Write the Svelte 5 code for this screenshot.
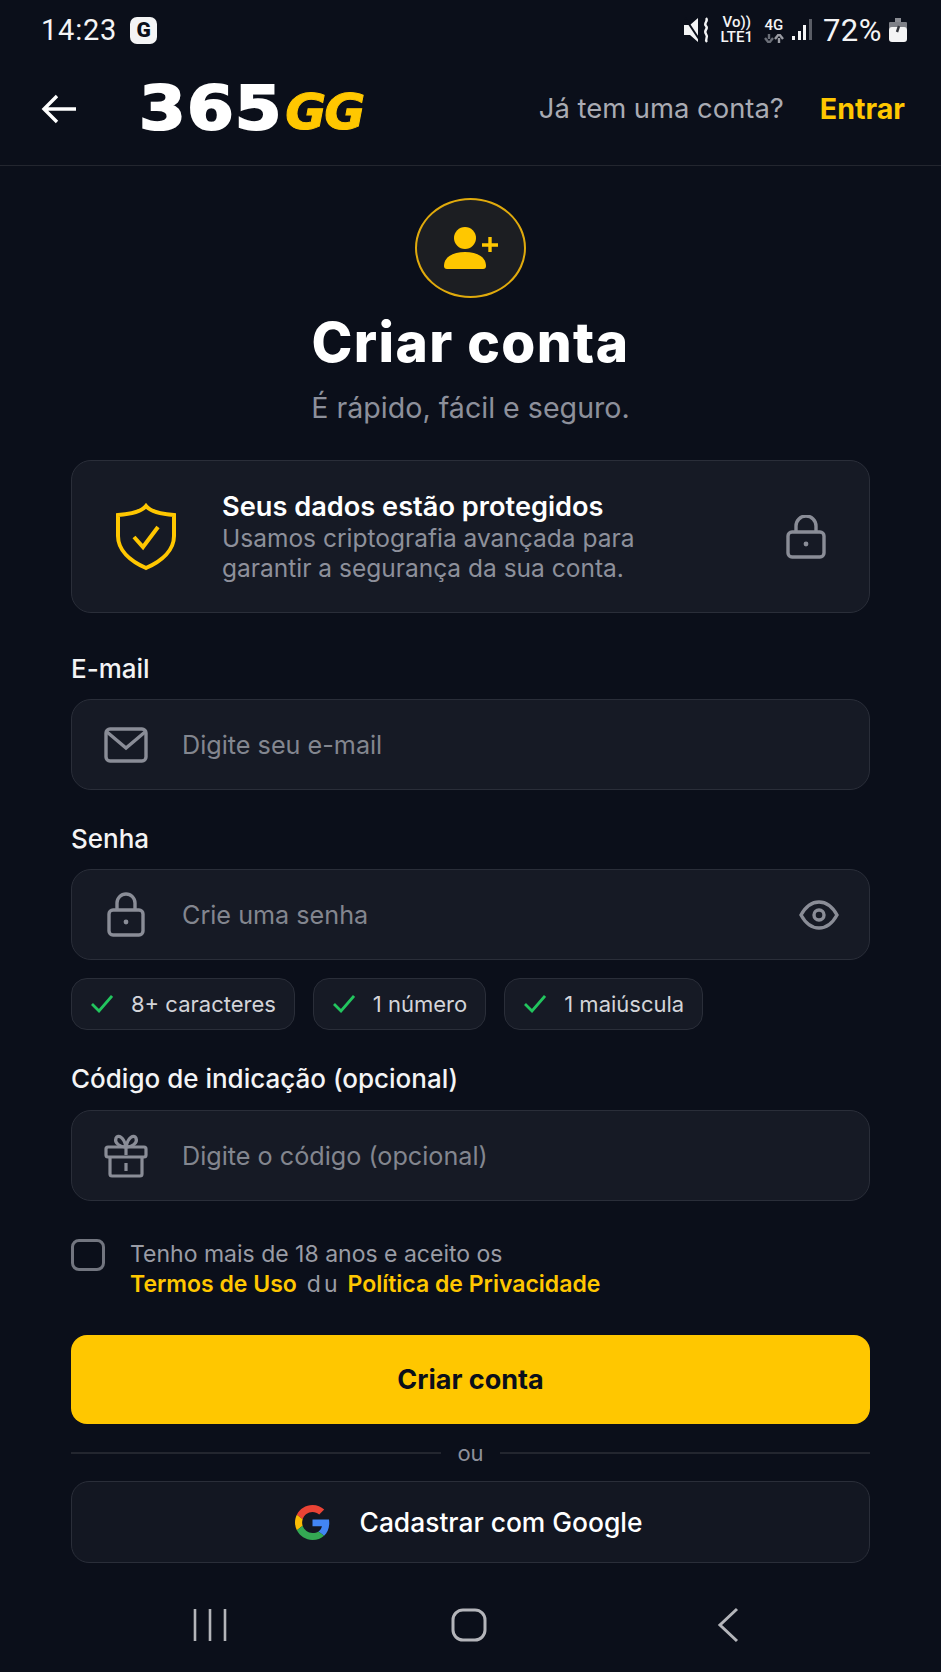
<script>
  const chips = ['8+ caracteres', '1 número', '1 maiúscula'];
</script>

<div class="screen">
  <div class="status">
    <div class="status-left">
      <span class="clock">14:23</span>
      <span class="g-badge">G</span>
    </div>
    <div class="status-right">
      <!-- mute icon -->
      <svg width="26" height="26" viewBox="0 0 26 26">
        <path d="M0 8h6l8-7v24l-8-7H0z" fill="#f4f4f5" />
        <path d="M1 1l16 24" stroke="#0b0f1a" stroke-width="2" />
        <path d="M22 1c3 3-3 5 0 8s-3 4 0 8-2 5 1 8" stroke="#f4f4f5" stroke-width="2.4" fill="none" />
      </svg>
      <div class="net">
        <span>Vo))</span>
        <span>LTE1</span>
      </div>
      <div class="net four">
        <span>4G</span>
        <svg width="20" height="9" viewBox="0 0 20 9">
          <path d="M5 0v5M1 4l4 5 4-5" stroke="#6b6f78" stroke-width="2.4" fill="none" />
          <path d="M15 9V4M11 5l4-5 4 5" stroke="#9a9ca3" stroke-width="2.4" fill="none" />
        </svg>
      </div>
      <svg width="22" height="24" viewBox="0 0 22 24">
        <rect x="1" y="18" width="3" height="4" fill="#f4f4f5" />
        <rect x="7" y="13" width="3" height="9" fill="#f4f4f5" />
        <rect x="12" y="7" width="3" height="15" fill="#f4f4f5" />
        <rect x="18" y="1" width="3" height="21" fill="#5a5d66" />
      </svg>
      <span class="pct">72%</span>
      <svg width="18" height="26" viewBox="0 0 18 26">
        <rect x="6" y="1" width="6" height="4" fill="#8a8c93" />
        <rect x="0" y="5" width="18" height="7" rx="1" fill="#7e8087" />
        <rect x="0" y="10" width="18" height="15" rx="3" fill="#f4f4f5" />
        <path d="M10 9l-2 6" stroke="#33353c" stroke-width="2.4" />
      </svg>
    </div>
  </div>

  <header class="topbar">
    <svg class="back" width="36" height="30" viewBox="0 0 36 30">
      <path d="M35 15H3M16 2L3 15l13 13" stroke="#fff" stroke-width="3.4" fill="none" />
    </svg>
    <div class="logo"><span class="logo-num">365</span><span class="logo-gg">GG</span></div>
    <div class="account">
      <span class="account-q">Já tem uma conta?</span>
      <span class="account-link">Entrar</span>
    </div>
  </header>

  <main class="form">
    <div class="avatar">
      <svg width="54" height="44" viewBox="0 0 54 44">
        <circle cx="21" cy="12" r="11" fill="#ffc700" />
        <path d="M0 40c0-9 9-14 21-14s21 5 21 14c0 2-1 3-3 3H3c-2 0-3-1-3-3z" fill="#ffc700" />
        <path d="M46 11v15M38 19h16" stroke="#ffc700" stroke-width="3.4" />
      </svg>
    </div>
    <h1>Criar conta</h1>
    <p class="subtitle">É rápido, fácil e seguro.</p>

    <section class="secure">
      <svg class="shield" width="62" height="68" viewBox="0 0 62 68">
        <path d="M31 3c4 5 14 8 28 9v21c0 14-12 25-28 32C15 58 3 47 3 33V12c14-1 24-4 28-9z" stroke="#ffc700" stroke-width="4" fill="none" />
        <path d="M19 34l9 10 15-20" stroke="#ffc700" stroke-width="4" fill="none" />
      </svg>
      <div class="secure-text">
        <div class="secure-title">Seus dados estão protegidos</div>
        <div class="secure-desc">Usamos criptografia avançada para<br />garantir a segurança da sua conta.</div>
      </div>
      <svg width="40" height="44" viewBox="0 0 40 44">
        <rect x="2" y="17" width="36" height="25" rx="4" stroke="#8a8d97" stroke-width="3.4" fill="none" />
        <path d="M10 17V11a10 10 0 0 1 20 0v6" stroke="#8a8d97" stroke-width="3.4" fill="none" />
        <circle cx="20" cy="29" r="2.4" fill="#8a8d97" />
      </svg>
    </section>

    <label class="label first" for="email">E-mail</label>
    <div class="field" id="email">
      <svg class="field-icon" width="44" height="36" viewBox="0 0 44 36">
        <rect x="2" y="2" width="40" height="32" rx="4" stroke="#8a8d97" stroke-width="3.4" fill="none" />
        <path d="M3 5l19 16L41 5" stroke="#8a8d97" stroke-width="3.4" fill="none" />
      </svg>
      <span class="placeholder">Digite seu e-mail</span>
    </div>

    <label class="label" for="senha">Senha</label>
    <div class="field" id="senha">
      <svg class="field-icon" width="44" height="45" viewBox="0 0 44 45">
        <rect x="5" y="18" width="34" height="25" rx="4" stroke="#8a8d97" stroke-width="3.4" fill="none" />
        <path d="M13 18V11a9 9 0 0 1 18 0v7" stroke="#8a8d97" stroke-width="3.4" fill="none" />
        <circle cx="22" cy="30" r="2.4" fill="#8a8d97" />
      </svg>
      <span class="placeholder">Crie uma senha</span>
      <svg class="eye" width="40" height="30" viewBox="0 0 40 30">
        <path d="M2 15C7 6 13 2 20 2s13 4 18 13c-5 9-11 13-18 13S7 24 2 15z" stroke="#8a8d97" stroke-width="3.4" fill="none" />
        <circle cx="20" cy="15" r="5" stroke="#8a8d97" stroke-width="3.4" fill="none" />
      </svg>
    </div>

    <div class="chips">
      {#each chips as chip}
        <div class="chip">
          <svg width="22" height="18" viewBox="0 0 22 18">
            <path d="M1 9l7 7L21 1" stroke="#22c55e" stroke-width="2.8" fill="none" />
          </svg>
          <span>{chip}</span>
        </div>
      {/each}
    </div>

    <label class="label code" for="codigo">Código de indicação (opcional)</label>
    <div class="field" id="codigo">
      <svg class="field-icon" width="44" height="44" viewBox="0 0 44 44">
        <rect x="2" y="13" width="40" height="10" rx="2" stroke="#8a8d97" stroke-width="3.2" fill="none" />
        <path d="M6 23v17a2 2 0 0 0 2 2h28a2 2 0 0 0 2-2V23M22 13v8M22 29v8" stroke="#8a8d97" stroke-width="3.2" fill="none" />
        <path d="M22 13C16 13 10 9 12 4c2-4 8-1 10 9 2-10 8-13 10-9 2 5-4 9-10 9z" stroke="#8a8d97" stroke-width="3.2" fill="none" />
      </svg>
      <span class="placeholder">Digite o código (opcional)</span>
    </div>

    <div class="terms">
      <span class="checkbox"></span>
      <div class="terms-text">
        <div>Tenho mais de 18 anos e aceito os</div>
        <div><span class="terms-link">Termos de Uso</span><span class="terms-du">du</span><span class="terms-link">Política de Privacidade</span></div>
      </div>
    </div>

    <button class="submit">Criar conta</button>

    <div class="divider"><span>ou</span></div>

    <button class="google">
      <svg width="35" height="35" viewBox="0 0 48 48">
        <path fill="#EA4335" d="M24 9.5c3.54 0 6.71 1.22 9.21 3.6l6.85-6.85C35.9 2.38 30.47 0 24 0 14.62 0 6.51 5.38 2.56 13.22l7.98 6.19C12.43 13.72 17.74 9.5 24 9.5z" />
        <path fill="#4285F4" d="M46.98 24.55c0-1.57-.15-3.09-.38-4.55H24v9.02h12.94c-.58 2.96-2.26 5.48-4.78 7.18l7.73 6c4.51-4.18 7.09-10.36 7.09-17.65z" />
        <path fill="#FBBC05" d="M10.53 28.59c-.48-1.45-.76-2.99-.76-4.59s.27-3.14.76-4.59l-7.98-6.19C.92 16.46 0 20.12 0 24c0 3.88.92 7.54 2.56 10.78l7.97-6.19z" />
        <path fill="#34A853" d="M24 48c6.48 0 11.93-2.13 15.89-5.81l-7.73-6c-2.15 1.45-4.92 2.3-8.16 2.3-6.26 0-11.57-4.22-13.47-9.91l-7.98 6.19C6.51 42.62 14.62 48 24 48z" />
      </svg>
      <span>Cadastrar com Google</span>
    </button>
  </main>

  <nav class="navbar">
    <div class="nav-item">
      <svg width="34" height="32" viewBox="0 0 34 32">
        <path d="M2 0v32M17 0v32M32 0v32" stroke="#b4b5ba" stroke-width="2.6" />
      </svg>
    </div>
    <div class="nav-item">
      <svg width="36" height="34" viewBox="0 0 36 34">
        <rect x="2" y="2" width="32" height="30" rx="10" stroke="#b4b5ba" stroke-width="3" fill="none" />
      </svg>
    </div>
    <div class="nav-item">
      <svg width="22" height="36" viewBox="0 0 22 36">
        <path d="M20 2L3 18l17 16" stroke="#b4b5ba" stroke-width="3" fill="none" />
      </svg>
    </div>
  </nav>
</div>

<style>
  :global(body) {
    margin: 0;
    background: #0b0f1a;
  }

  .screen {
    width: 941px;
    height: 1672px;
    overflow: hidden;
    background: #0b0f1a;
    color: #fff;
    font-family: Inter, "Liberation Sans", sans-serif;
  }

  .status {
    height: 60px;
    padding: 0 34px 0 41px;
    display: flex;
    align-items: center;
    justify-content: space-between;
    color: #f4f4f5;
    font-family: Roboto, sans-serif;
  }

  .status-left {
    display: flex;
    align-items: center;
    gap: 13px;
  }

  .clock {
    font-size: 29px;
    letter-spacing: 0.8px;
  }

  .g-badge {
    width: 27px;
    height: 27px;
    border-radius: 7px;
    background: #f4f4f5;
    color: #0b0f1a;
    font-size: 21px;
    font-weight: 900;
    display: flex;
    align-items: center;
    justify-content: center;
  }

  .status-right {
    display: flex;
    align-items: center;
    gap: 7px;
  }

  .net {
    display: flex;
    flex-direction: column;
    align-items: center;
    font-size: 15px;
    line-height: 15px;
    font-weight: 500;
    margin-left: 4px;
  }

  .four svg {
    margin-top: 1px;
  }

  .pct {
    font-size: 31px;
    letter-spacing: 0.5px;
    margin-left: 3px;
  }

  .topbar {
    height: 106px;
    box-sizing: border-box;
    border-bottom: 1px solid #23262f;
    padding: 0 36px 8px 41px;
    display: flex;
    align-items: center;
  }

  .logo {
    margin-left: 62px;
    margin-top: -2px;
    display: flex;
    align-items: baseline;
    line-height: 1;
    font-family: "DejaVu Sans", sans-serif;
    font-weight: 700;
  }

  .logo-num {
    display: inline-block;
    font-size: 60px;
    letter-spacing: 1px;
    color: #fff;
    -webkit-text-stroke: 2px #fff;
    transform: scaleX(1.12);
    transform-origin: left;
    margin-right: 18px;
  }

  .logo-gg {
    font-size: 50px;
    font-style: italic;
    color: #ffc700;
    letter-spacing: -2px;
    -webkit-text-stroke: 1px #ffc700;
  }

  .account {
    margin-left: auto;
    display: flex;
    gap: 36px;
    font-size: 27.4px;
  }

  .account-q {
    color: #a9abb3;
  }

  .account-link {
    color: #ffc700;
    font-size: 28.6px;
    font-weight: 700;
  }

  .form {
    padding: 32px 71px 0;
    display: flex;
    flex-direction: column;
  }

  .avatar {
    width: 111px;
    height: 100px;
    box-sizing: border-box;
    align-self: center;
    border: 2px solid #e0aa0c;
    border-radius: 50%;
    background: #1c1e22;
    display: flex;
    align-items: center;
    justify-content: center;
  }

  h1 {
    margin: 12px 0 0;
    font-size: 55px;
    line-height: 64px;
    font-weight: 800;
    letter-spacing: 1.4px;
    text-align: center;
  }

  .subtitle {
    margin: 17px 0 0;
    font-size: 28.6px;
    line-height: 34px;
    color: #8d909b;
    text-align: center;
  }

  .secure {
    margin-top: 35px;
    height: 153px;
    box-sizing: border-box;
    padding: 0 43px;
    border: 1px solid #2a2e39;
    border-radius: 20px;
    background: #161a25;
    display: flex;
    align-items: center;
  }

  .secure-text {
    margin-left: 45px;
    flex: 1;
  }

  .secure-title {
    font-size: 27.2px;
    line-height: 32px;
    font-weight: 600;
  }

  .secure-desc {
    font-size: 24.5px;
    line-height: 30px;
    color: #8d909b;
  }

  .label {
    display: block;
    margin-top: 33px;
    margin-bottom: 14px;
    font-size: 26px;
    line-height: 32px;
    font-weight: 450;
    color: #f4f4f5;
  }

  .label.first {
    margin-top: 40px;
    margin-bottom: 14px;
  }

  .label.code {
    margin-top: 33px;
    margin-bottom: 15px;
  }

  .field {
    height: 91px;
    box-sizing: border-box;
    padding: 0 30px 0 32px;
    border: 1px solid #2a2e39;
    border-radius: 20px;
    background: #161a25;
    display: flex;
    align-items: center;
  }

  .placeholder {
    margin-left: 34px;
    font-size: 25.2px;
    color: #83868f;
  }

  .eye {
    margin-left: auto;
  }

  .chips {
    margin-top: 18px;
    display: flex;
    gap: 18px;
  }

  .chip {
    height: 52px;
    box-sizing: border-box;
    padding: 0 18px 0 19px;
    border: 1px solid #2a2e39;
    border-radius: 16px;
    background: #161a25;
    display: flex;
    align-items: center;
    gap: 18px;
    font-size: 22px;
    color: #d3d4d9;
  }

  .terms {
    margin-top: 38px;
    display: flex;
    gap: 25px;
  }

  .checkbox {
    width: 34px;
    height: 32px;
    box-sizing: border-box;
    border: 3px solid #72757f;
    border-radius: 8px;
    flex-shrink: 0;
  }

  .terms-text {
    font-size: 23px;
    line-height: 30px;
    color: #9a9ca5;
  }

  .terms-link {
    color: #ffc700;
    font-weight: 600;
  }

  .terms-du {
    margin: 0 7px 0 10px;
    letter-spacing: 3px;
  }

  .submit {
    margin-top: 36px;
    height: 89px;
    border: none;
    border-radius: 16px;
    background: #ffc700;
    color: #0b0f1a;
    font-family: inherit;
    font-size: 27px;
    font-weight: 700;
  }

  .divider {
    margin-top: 17px;
    height: 24px;
    display: flex;
    align-items: center;
    gap: 16px;
    font-size: 22px;
    color: #8d909b;
  }

  .divider::before,
  .divider::after {
    content: '';
    flex: 1;
    height: 2px;
    background: #23262f;
  }

  .google {
    margin-top: 16px;
    height: 82px;
    padding-right: 10px;
    border: 1px solid #2a2e39;
    border-radius: 18px;
    background: #131722;
    color: #fff;
    font-family: inherit;
    font-size: 26.4px;
    font-weight: 450;
    display: flex;
    align-items: center;
    justify-content: center;
    gap: 30px;
  }

  .navbar {
    margin-top: 44px;
    padding-right: 4px;
    display: flex;
    justify-content: center;
  }

  .nav-item {
    width: 259px;
    height: 36px;
    display: flex;
    align-items: center;
    justify-content: center;
  }
</style>
